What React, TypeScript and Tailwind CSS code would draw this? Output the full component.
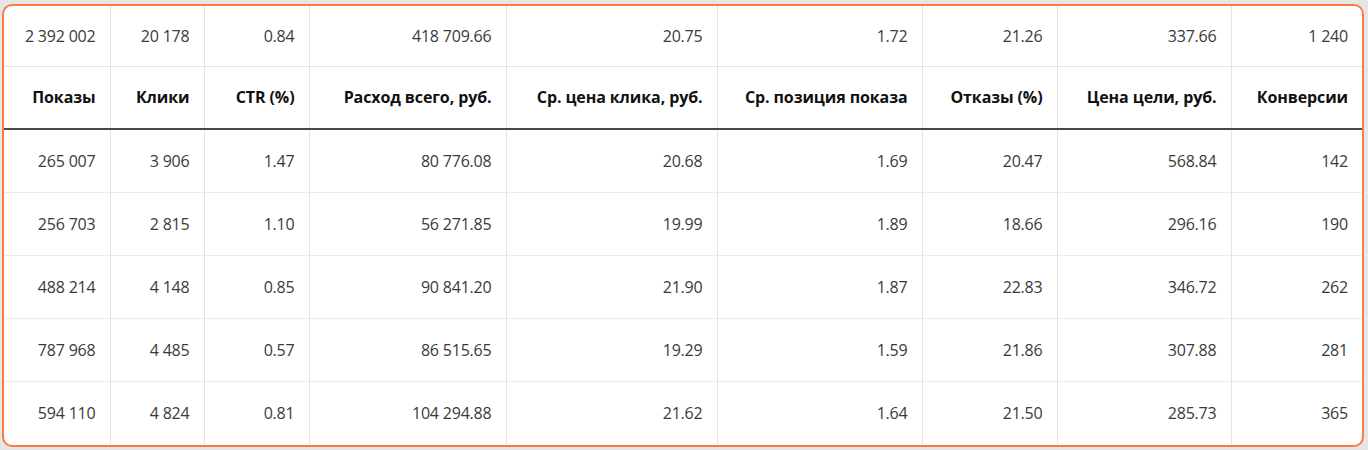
import React from 'react';

const S = '\u00a0';

const COLS = [106, 94, 105, 197, 211, 205, 135, 174, 131];

const TOTALS = [`2${S}392${S}002`, `20${S}178`, '0.84', `418${S}709.66`, '20.75', '1.72', '21.26', '337.66', `1${S}240`];

const HEADERS = [
  'Показы',
  'Клики',
  'CTR (%)',
  'Расход всего, руб.',
  'Ср. цена клика, руб.',
  'Ср. позиция показа',
  'Отказы (%)',
  'Цена цели, руб.',
  'Конверсии',
];

const ROWS = [
  [`265${S}007`, `3${S}906`, '1.47', `80${S}776.08`, '20.68', '1.69', '20.47', '568.84', '142'],
  [`256${S}703`, `2${S}815`, '1.10', `56${S}271.85`, '19.99', '1.89', '18.66', '296.16', '190'],
  [`488${S}214`, `4${S}148`, '0.85', `90${S}841.20`, '21.90', '1.87', '22.83', '346.72', '262'],
  [`787${S}968`, `4${S}485`, '0.57', `86${S}515.65`, '19.29', '1.59', '21.86', '307.88', '281'],
  [`594${S}110`, `4${S}824`, '0.81', `104${S}294.88`, '21.62', '1.64', '21.50', '285.73', '365'],
];

export default function App() {
  return (
    <div
      className="w-[1368px] h-[450px] bg-[#e5e6e6] pt-[4px] pl-[2px] pr-[4px] pb-[3px]"
      style={{ fontFamily: '"Open Sans", "Noto Sans", sans-serif' }}
    >
      <div className="h-full rounded-[10px] border-2 border-[#fd7a45] bg-white overflow-hidden">
        <table className="table-fixed border-collapse w-[1358px]">
          <colgroup>
            {COLS.map((w, i) => (
              <col key={i} style={{ width: w }} />
            ))}
          </colgroup>
          <tbody>
            <tr className="h-[60px] border-b border-[#e3e3e3]">
              {TOTALS.map((v, i) => (
                <td
                  key={i}
                  className="text-right pr-[14px] text-[16px] tracking-[-0.2px] text-[#3a3a3a] border-l border-[#e3e3e3] first:border-l-0"
                >
                  {v}
                </td>
              ))}
            </tr>
            <tr className="h-[63px] border-b-2 border-[#4a4a4a]">
              {HEADERS.map((v, i) => (
                <td
                  key={i}
                  className="text-right pr-[14px] text-[16px] font-bold tracking-[-0.1px] text-[#111111] border-l border-[#e3e3e3] first:border-l-0 whitespace-nowrap"
                >
                  {v}
                </td>
              ))}
            </tr>
            {ROWS.map((row, r) => (
              <tr key={r} className="h-[63px] border-b border-[#ececec] last:border-b-0">
                {row.map((v, i) => (
                  <td
                    key={i}
                    className="text-right pr-[14px] text-[16px] tracking-[-0.2px] text-[#3a3a3a] border-l border-[#e3e3e3] first:border-l-0"
                  >
                    {v}
                  </td>
                ))}
              </tr>
            ))}
          </tbody>
        </table>
      </div>
    </div>
  );
}
